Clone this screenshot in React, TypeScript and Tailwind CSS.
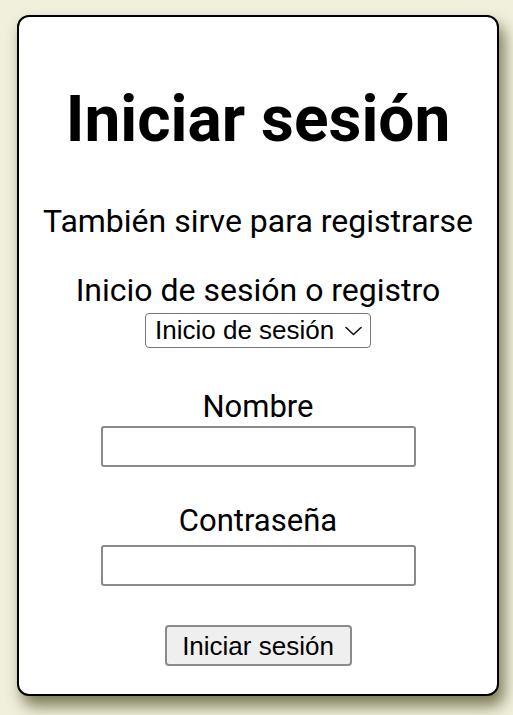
import React from "react";

export default function App() {
  return (
    <div className="min-h-[715px] w-full bg-[#f1f0dc] pt-[15px] pl-[17px]" style={{ fontFamily: "Roboto, 'Liberation Sans', sans-serif" }}>
      <div className="w-[482px] rounded-[12px] border-2 border-black bg-white pb-[28px] shadow-[5px_10px_15px_rgba(70,70,30,0.7)] flex flex-col items-center text-black">
        <h1 className="mt-[67px] text-[64px] leading-[72px] font-bold">Iniciar sesión</h1>
        <p className="mt-[47px] text-[32px] leading-[36px]">También sirve para registrarse</p>
        <label className="mt-[33px] text-[32px] leading-[36px]">Inicio de sesión o registro</label>
        <div className="relative mt-[5px] h-[35px] w-[226px]">
          <select
            className="h-full w-full appearance-none rounded-[4px] border border-[#767676] bg-white pl-[9px] text-[26px] leading-[33px]"
            style={{ fontFamily: "'Liberation Sans', Arial, sans-serif" }}
            defaultValue="login"
          >
            <option value="login">Inicio de sesión</option>
            <option value="register">Registro</option>
          </select>
          <svg
            className="pointer-events-none absolute right-[9px] top-[13px]"
            width="17"
            height="10"
            viewBox="0 0 17 10"
            fill="none"
          >
            <path d="M1 1.5 L8.5 8.5 L16 1.5" stroke="#111" strokeWidth="1.6" strokeLinecap="round" strokeLinejoin="round" />
          </svg>
        </div>
        <label className="mt-[42px] text-[31px] leading-[34px]">Nombre</label>
        <input type="text" className="mt-[2px] h-[41px] w-[315px] rounded-[3px] border-2 border-[#8a8a8a] bg-white" />
        <label className="mt-[37px] text-[31px] leading-[34px]">Contraseña</label>
        <input type="password" className="mt-[7px] h-[41px] w-[315px] rounded-[3px] border-2 border-[#8a8a8a] bg-white" />
        <button
          className="mt-[39px] h-[41px] w-[187px] rounded-[4px] border-2 border-[#8a8a8a] bg-[#efefef] text-[26px]"
          style={{ fontFamily: "'Liberation Sans', Arial, sans-serif" }}
        >
          Iniciar sesión
        </button>
      </div>
    </div>
  );
}
